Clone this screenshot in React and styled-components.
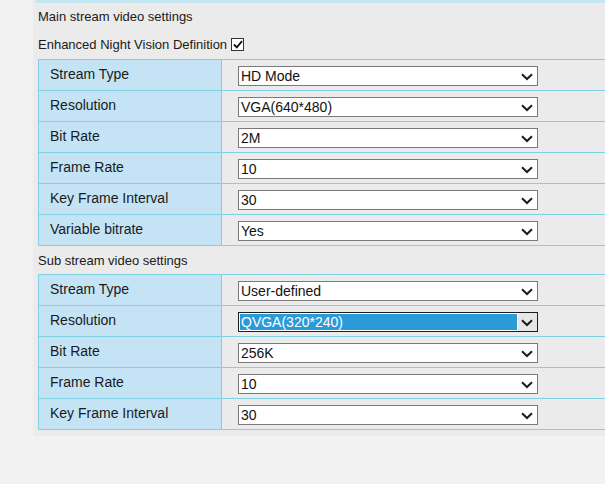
import React from "react";
import styled, { createGlobalStyle } from "styled-components";

const Global = createGlobalStyle`
  html, body { margin: 0; padding: 0; background: #f2f2f2; }
  body { font-family: "Liberation Sans", Arial, sans-serif; color: #1a1a1a; overflow: hidden; }
`;

const Page = styled.div`
  width: 605px;
  height: 484px;
  overflow: hidden;
  display: flex;
  background: #f2f2f2;
`;

const Panel = styled.div`
  margin-left: 33px;
  flex: 1;
  align-self: flex-start;
  background: #ebebeb;
  padding: 0 0 6px 5px;
  overflow: hidden;
`;

const TopBar = styled.div`
  height: 3px;
  margin-left: -2px;
  background: #c3e6f2;
`;

const Heading = styled.div`
  font-size: 13px;
  height: ${(p) => p.$h || 29}px;
  display: flex;
  align-items: center;
  gap: 4px;
`;

const CheckBox = styled.span`
  display: inline-flex;
  align-items: center;
  justify-content: center;
  width: 11px;
  height: 11px;
  border: 1px solid #333;
  background: #fff;
  margin-top: 1px;
`;

const Table = styled.div`
  display: grid;
  grid-template-columns: 183px 400px;
  border-top: 1px solid #7fd0e2;
  border-left: 1px solid #7fd0e2;
`;

const LabelCell = styled.div`
  height: 31px;
  box-sizing: border-box;
  background: #c4e4f6;
  border-right: 1px solid #7fd0e2;
  border-bottom: 1px solid #7fd0e2;
  padding-left: 11px;
  font-size: 14px;
  line-height: 29px;
`;

const ValueCell = styled.div`
  height: 31px;
  box-sizing: border-box;
  border-bottom: 1px solid #7fd0e2;
  padding-left: 16px;
  display: flex;
  align-items: center;
`;

const SelectBox = styled.div`
  position: relative;
  width: 300px;
  height: 20px;
  box-sizing: border-box;
  border: 1px solid ${(p) => (p.$active ? "#1e1e1e" : "#7a7a7a")};
  background: ${(p) => (p.$active ? "#e6e6e6" : "#fff")};
  font-size: 14px;
  display: flex;
  align-items: center;
  margin-top: 1px;
`;

const SelectText = styled.span`
  flex: ${(p) => (p.$active ? "0 0 279px" : "1")};
  height: 100%;
  box-sizing: border-box;
  color: ${(p) => (p.$active ? "#fff" : "#111")};
  background: ${(p) => (p.$active ? "#2a9ad9" : "transparent")};
  border: ${(p) => (p.$active ? "1px solid #fff" : "none")};
  line-height: ${(p) => (p.$active ? "16px" : "18px")};
  padding-left: ${(p) => (p.$active ? "1px" : "2px")};
`;

const Chevron = styled.svg`
  position: absolute;
  right: 4px;
  top: 6px;
`;

const Arrow = () => (
  <Chevron width="12" height="8" viewBox="0 0 12 8">
    <path d="M1 1.2 L6 6 L11 1.2" fill="none" stroke="#1c1c1c" strokeWidth="2" />
  </Chevron>
);

const Select = ({ value, active }) => (
  <SelectBox $active={active}>
    <SelectText $active={active}>{value}</SelectText>
    <Arrow />
  </SelectBox>
);

const main = [
  ["Stream Type", "HD Mode"],
  ["Resolution", "VGA(640*480)"],
  ["Bit Rate", "2M"],
  ["Frame Rate", "10"],
  ["Key Frame Interval", "30"],
  ["Variable bitrate", "Yes"],
];

const sub = [
  ["Stream Type", "User-defined"],
  ["Resolution", "QVGA(320*240)", true],
  ["Bit Rate", "256K"],
  ["Frame Rate", "10"],
  ["Key Frame Interval", "30"],
];

const Rows = ({ rows }) =>
  rows.map(([label, value, active]) => (
    <React.Fragment key={label}>
      <LabelCell>{label}</LabelCell>
      <ValueCell>
        <Select value={value} active={active} />
      </ValueCell>
    </React.Fragment>
  ));

export default function App() {
  return (
    <Page>
      <Global />
      <Panel>
        <TopBar />
        <Heading $h={26}>Main stream video settings</Heading>
        <Heading $h={30}>
          Enhanced Night Vision Definition
          <CheckBox>
            <svg width="10" height="9" viewBox="0 0 10 9">
              <path d="M1 4.5 L3.8 7.3 L9 1.2" fill="none" stroke="#111" strokeWidth="1.8" />
            </svg>
          </CheckBox>
        </Heading>
        <Table>
          <Rows rows={main} />
        </Table>
        <Heading $h={28}>Sub stream video settings</Heading>
        <Table>
          <Rows rows={sub} />
        </Table>
      </Panel>
    </Page>
  );
}
